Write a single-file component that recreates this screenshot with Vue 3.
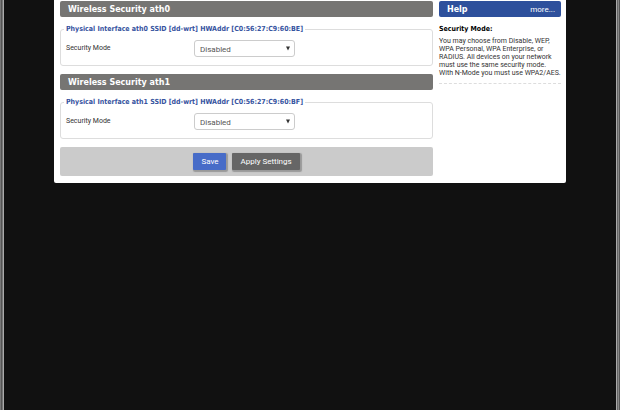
<script setup>
import { reactive } from 'vue'

const interfaces = reactive([
  { name: 'ath0', ssid: 'dd-wrt', hwaddr: 'C0:56:27:C9:60:BE', mode: 'disabled' },
  { name: 'ath1', ssid: 'dd-wrt', hwaddr: 'C0:56:27:C9:60:BF', mode: 'disabled' }
])

const modes = [
  { value: 'disabled', label: 'Disabled' },
  { value: 'wep', label: 'WEP' },
  { value: 'psk', label: 'WPA Personal' },
  { value: 'wpa', label: 'WPA Enterprise' },
  { value: 'radius', label: 'RADIUS' }
]
</script>

<template>
  <div class="page">
    <div class="wrapper">
      <main>
        <form @submit.prevent>
          <section v-for="item in interfaces" :key="item.name">
            <h2>Wireless Security {{ item.name }}</h2>
            <fieldset>
              <legend>Physical Interface {{ item.name }} SSID [{{ item.ssid }}] HWAddr [{{ item.hwaddr }}]</legend>
              <div class="setting">
                <label :for="'mode-' + item.name">Security Mode</label>
                <div class="select">
                  <select :id="'mode-' + item.name" v-model="item.mode">
                    <option v-for="mode in modes" :key="mode.value" :value="mode.value">{{ mode.label }}</option>
                  </select>
                  <svg viewBox="0 0 4 5" aria-hidden="true"><path d="M0 0.5h4L2 4.5z" /></svg>
                </div>
              </div>
            </fieldset>
          </section>

          <div class="submit-footer">
            <button type="submit" class="primary">Save</button>
            <button type="button">Apply Settings</button>
          </div>
        </form>
      </main>

      <aside>
        <div class="help-title">
          <h2>Help</h2>
          <a href="#help">more...</a>
        </div>
        <dl>
          <dt>Security Mode:</dt>
          <dd>You may choose from Disable, WEP, WPA Personal, WPA Enterprise, or RADIUS. All devices on your network must use the same security mode. With N-Mode you must use WPA2/AES.</dd>
        </dl>
      </aside>
    </div>
  </div>
</template>

<style>
body {
  margin: 0;
  background: #111;
}
</style>

<style scoped>
.page {
  min-height: 100vh;
  box-sizing: border-box;
  padding: 0 54px;
  background:
    linear-gradient(to right, #777 1px, #555 1px 2px, #777 2px 3px, #aaa 3px) left / 4px 100% no-repeat,
    linear-gradient(to right, #aaa 1px, #666 1px 2px, #888 2px 3px, #555 3px) right / 4px 100% no-repeat,
    #111;
  font-family: Roboto, Tahoma, sans-serif;
  font-size: 7px;
  line-height: 8px;
  color: #333;
}

.wrapper {
  display: flex;
  gap: 6px;
  padding: 1px 5px 7px 6px;
  background: #fff;
  border-radius: 0 0 2px 2px;
}

main {
  flex: 1;
  min-width: 0;
}

aside {
  flex: 0 0 122px;
}

h2 {
  margin: 0;
  padding: 2px 8px 0;
  border-radius: 2px;
  background: #767573;
  color: #fff;
  font-family: "DejaVu Sans", Verdana, sans-serif;
  font-size: 8px;
  font-weight: bold;
  line-height: 14px;
}

fieldset {
  margin: 7px 0 8px;
  padding: 6px 5px 8px;
  border: 1px solid #ddd;
  border-radius: 3px;
}

legend {
  margin-left: -2px;
  padding: 0 2px;
  color: #3653a0;
  font-family: "DejaVu Sans Condensed", Tahoma, sans-serif;
  font-weight: bold;
  line-height: 10px;
}

.setting {
  display: flex;
}

label {
  width: 128px;
  padding-top: 4px;
}

.select {
  position: relative;
}

select {
  display: block;
  width: 101px;
  height: 17px;
  padding: 1px 5px 0;
  border: 1px solid #ccc;
  border-radius: 3px;
  appearance: none;
  background: #fff;
  color: #555;
  font-family: Roboto, Tahoma, sans-serif;
  font-size: 8px;
}

.select svg {
  position: absolute;
  top: 6px;
  right: 5px;
  width: 4px;
  height: 5px;
  fill: #333;
  pointer-events: none;
}

.submit-footer {
  display: flex;
  justify-content: center;
  gap: 6px;
  padding: 6px 0;
  border-radius: 2px;
  background: #cbcbcb;
}

button {
  height: 17px;
  padding: 0 8px;
  border: 0;
  border-radius: 1px;
  background: #666;
  box-shadow: 1px 1px 1px 1px #999;
  color: #fff;
  font-family: Roboto, Tahoma, sans-serif;
  font-size: 8px;
  line-height: 16px;
  cursor: pointer;
}

.primary {
  background: #476cc8;
}

.help-title {
  display: flex;
  justify-content: space-between;
  border-radius: 2px;
  background: #2e509c;
}

.help-title h2 {
  background: none;
}

.help-title a {
  padding: 2px 6px 0 0;
  color: #fff;
  font-size: 8px;
  line-height: 14px;
  text-decoration: none;
}

dl {
  margin: 8px 0 0;
  padding-bottom: 6px;
  border-bottom: 1px dashed #ddd;
}

dt {
  margin-bottom: 4px;
  color: #000;
  font-family: "DejaVu Sans Condensed", Tahoma, sans-serif;
  font-weight: bold;
}

dd {
  margin: 0;
}
</style>
